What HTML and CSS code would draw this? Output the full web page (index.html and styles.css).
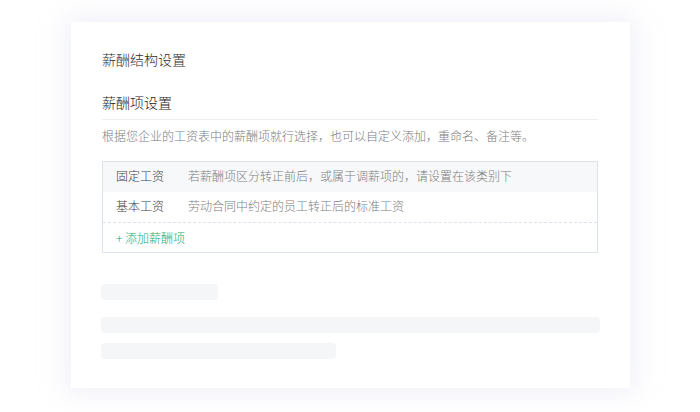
FILE: index.html
```html
<!DOCTYPE html>
<html lang="zh-CN">
<head>
<meta charset="utf-8">
<link rel="stylesheet" href="styles.css">
</head>
<body>
<div class="card">
  <div class="title">薪酬结构设置</div>
  <div class="section-title">薪酬项设置</div>
  <div class="desc">根据您企业的工资表中的薪酬项就行选择，也可以自定义添加，重命名、备注等。</div>
  <div class="table">
    <div class="row head">
      <span class="name">固定工资</span>
      <span class="note">若薪酬项区分转正前后，或属于调薪项的，请设置在该类别下</span>
    </div>
    <div class="row">
      <span class="name">基本工资</span>
      <span class="note">劳动合同中约定的员工转正后的标准工资</span>
    </div>
    <div class="row add">
      <span class="add-link">+ 添加薪酬项</span>
    </div>
  </div>
  <div class="skeleton">
    <div class="bar bar-short"></div>
    <div class="bar bar-long"></div>
    <div class="bar bar-mid"></div>
  </div>
</div>
</body>
</html>
```
FILE: styles.css
```css
html, body {
  margin: 0;
  padding: 0;
  background: #ffffff;
  font-family: "Noto Sans CJK SC", "Noto Sans", sans-serif;
}
body {
  width: 700px;
  height: 412px;
  overflow: hidden;
}
.card {
  box-sizing: border-box;
  margin: 22px 0 0 71px;
  width: 559px;
  height: 366px;
  background: #ffffff;
  box-shadow: 0 0 26px 4px rgba(205, 210, 235, 0.35);
  padding: 27px 32px 0 31px;
}
.title {
  font-size: 14px;
  line-height: 20px;
  color: #2e2e2e;
  font-weight: 300;
}
.section-title {
  margin-top: 23px;
  font-size: 14px;
  line-height: 20px;
  color: #1a1a1a;
  font-weight: 300;
  padding-bottom: 7px;
  border-bottom: 1px solid #eeeff2;
}
.desc {
  margin-top: 6px;
  font-size: 12px;
  line-height: 20px;
  color: #7c7c7c;
  font-weight: 300;
}
.table {
  margin-top: 15px;
  border: 1px solid #dde3ea;
  font-weight: 300;
}
.row {
  display: flex;
  align-items: center;
  box-sizing: border-box;
  height: 30px;
  padding: 0 0 3px 13px;
  font-size: 12px;
}
.row.head {
  background: #f7f8fa;
}
.row.add {
  border-top: 1px dashed #dde3ea;
  height: 30px;
  padding-bottom: 0;
}
.name {
  width: 72px;
  color: #3e3e3e;
}
.note {
  color: #7e7e7e;
}
.add-link {
  color: #14ad72;
}
.skeleton {
  margin-top: 31px;
  margin-left: -1px;
  display: flex;
  flex-direction: column;
}
.bar {
  height: 16px;
  border-radius: 4px;
  background: #f5f6f8;
}
.bar-short {
  width: 117px;
}
.bar-long {
  width: 499px;
  margin-top: 17px;
}
.bar-mid {
  width: 235px;
  margin-top: 10px;
}
```
